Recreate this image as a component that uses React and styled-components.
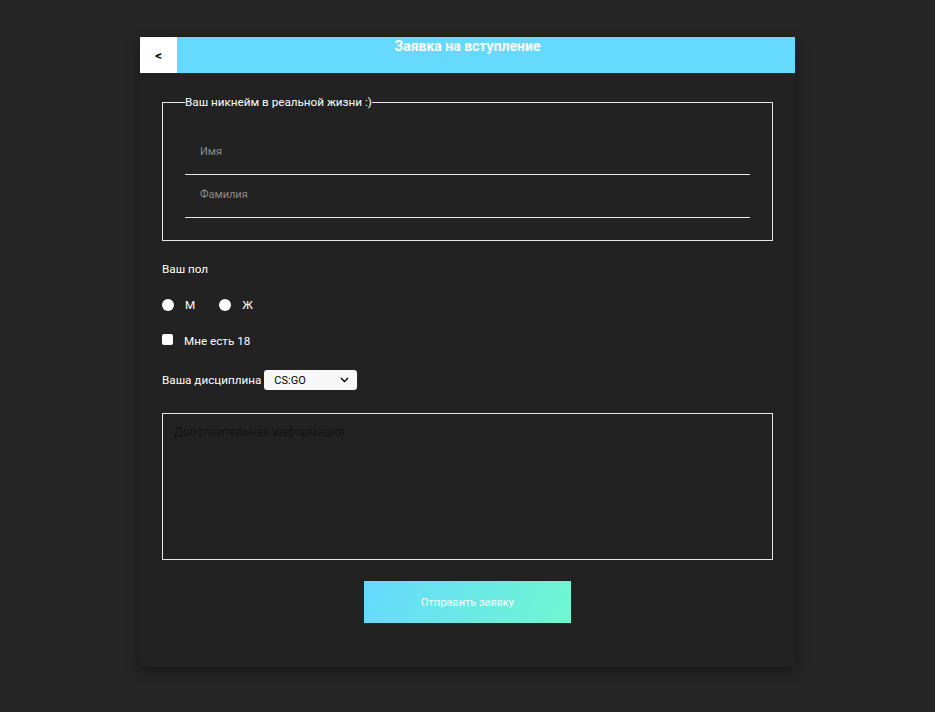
import React, { useState } from 'react';
import styled, { createGlobalStyle } from 'styled-components';

const Global = createGlobalStyle`
  html, body {
    margin: 0;
    padding: 0;
    background: #262626;
    font-family: Roboto, "Noto Sans", sans-serif;
  }
  * { box-sizing: border-box; }
`;

const Page = styled.div`
  min-height: 712px;
  padding-top: 37px;
  display: flex;
  justify-content: center;
`;

const Card = styled.div`
  width: 655px;
  height: 630px;
  background: #222222;
  box-shadow: 0 4px 12px rgba(0, 0, 0, 0.45);
  display: flex;
  flex-direction: column;
`;

const Header = styled.div`
  height: 36px;
  background: #66d9ff;
  display: flex;
`;

const Back = styled.button`
  width: 37px;
  height: 36px;
  border: none;
  background: #fff;
  color: #000;
  font-family: Roboto, sans-serif;
  font-weight: 700;
  font-size: 13px;
  padding: 0;
  cursor: pointer;
`;

const Title = styled.h1`
  flex: 1;
  margin: 0;
  text-align: center;
  color: #fff;
  font-size: 14px;
  font-weight: 700;
  line-height: 14px;
  padding-top: 2px;
  padding-right: 37px;
`;

const Form = styled.form`
  padding: 22px 22px 0 22px;
  display: flex;
  flex-direction: column;
`;

const Fieldset = styled.fieldset`
  margin: 0;
  border: 1px solid #e6e6e6;
  padding: 23px 22px 22px 22px;
  height: 146px;
  display: flex;
  flex-direction: column;
`;

const Legend = styled.legend`
  color: #fff;
  font-size: 11.7px;
  padding: 0;
`;

const Line = styled.input`
  background: transparent;
  border: none;
  border-bottom: 1px solid #e6e6e6;
  outline: none;
  height: 43px;
  padding: 0 15px 4px;
  color: #fff;
  font-family: Roboto, sans-serif;
  font-size: 11px;
  &::placeholder { color: #8c8c8c; }
`;

const Label = styled.div`
  color: #fff;
  font-size: 11.7px;
  margin-top: 21px;
`;

const Row = styled.div`
  display: flex;
  align-items: center;
  margin-top: ${p => p.$mt}px;
  color: #fff;
  font-size: 11.7px;
`;

const Radio = styled.span`
  width: 12px;
  height: 12px;
  border-radius: 50%;
  background: #fff;
  display: inline-block;
  margin-right: 11px;
`;

const Box = styled.span`
  width: 11px;
  height: 11px;
  border-radius: 2px;
  background: #fff;
  display: inline-block;
  margin-right: 11px;
  margin-top: -3px;
`;

const Option = styled.label`
  display: flex;
  align-items: center;
  margin-right: ${p => p.$mr || 0}px;
`;

const Select = styled.div`
  margin-left: 3px;
  width: 93px;
  height: 20px;
  background: #f7f7f7;
  border-radius: 3px;
  color: #000;
  font-size: 11px;
  display: flex;
  align-items: center;
  justify-content: space-between;
  padding: 0 8px 0 10px;
`;

const Area = styled.textarea`
  margin-top: 23px;
  height: 147px;
  background: transparent;
  border: 1px solid #e6e6e6;
  resize: none;
  outline: none;
  padding: 11px 11px;
  font-family: Roboto, sans-serif;
  font-size: 12px;
  color: #fff;
  &::placeholder { color: #141414; }
`;

const Submit = styled.button`
  align-self: center;
  margin-top: 21px;
  width: 207px;
  height: 42px;
  border: none;
  background: linear-gradient(110deg, #66d9ff 0%, #6ff7cf 100%);
  color: #fff;
  font-family: Roboto, sans-serif;
  font-size: 11px;
  cursor: pointer;
`;

export default function App() {
  const [sex, setSex] = useState('');
  return (
    <Page>
      <Global />
      <Card>
        <Header>
          <Back>&lt;</Back>
          <Title>Заявка на вступление</Title>
        </Header>
        <Form onSubmit={e => e.preventDefault()}>
          <Fieldset>
            <Legend>Ваш никнейм в реальной жизни :)</Legend>
            <Line placeholder="Имя" />
            <Line placeholder="Фамилия" />
          </Fieldset>
          <Label>Ваш пол</Label>
          <Row $mt={22}>
            <Option $mr={24} onClick={() => setSex('m')}><Radio />М</Option>
            <Option onClick={() => setSex('f')}><Radio />Ж</Option>
          </Row>
          <Row $mt={22}>
            <Option><Box />Мне есть 18</Option>
          </Row>
          <Row $mt={22}>
            Ваша дисциплина
            <Select>
              CS:GO
              <svg width="9" height="6" viewBox="0 0 9 6"><path d="M1 1l3.5 3.5L8 1" stroke="#000" strokeWidth="1.4" fill="none" /></svg>
            </Select>
          </Row>
          <Area placeholder="Дополнительная информация" />
          <Submit>Отправить заявку</Submit>
        </Form>
      </Card>
    </Page>
  );
}
